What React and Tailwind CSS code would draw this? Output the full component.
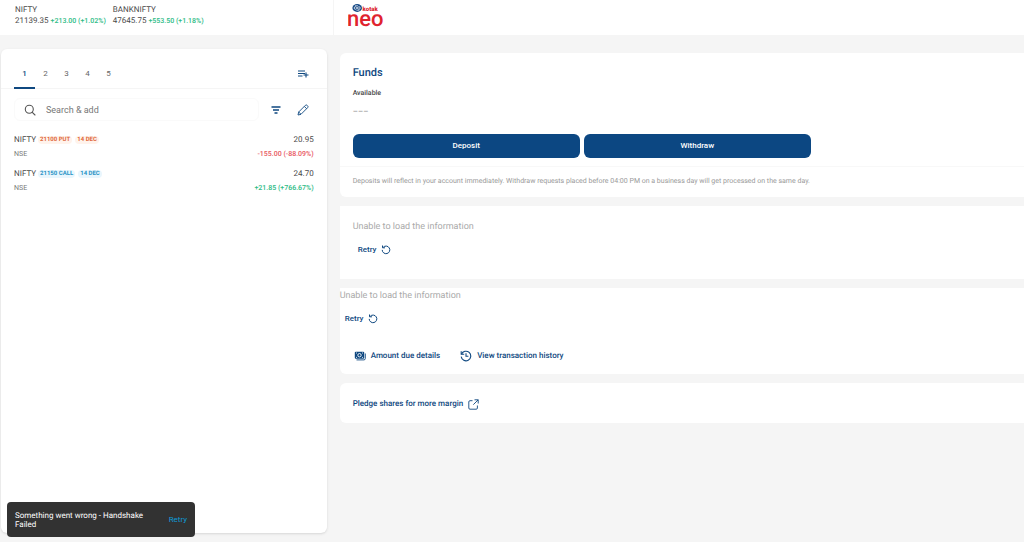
import { useState } from 'react'

const INDICES = [
  { name: 'NIFTY', price: '21139.35', change: '+213.00 (+1.02%)' },
  { name: 'BANKNIFTY', price: '47645.75', change: '+553.50 (+1.18%)' }
]

const WATCHLIST = [
  { symbol: 'NIFTY', strike: '21100 PUT', expiry: '14 DEC', type: 'put', exchange: 'NSE', price: '20.95', change: '-155.00 (-88.09%)', up: false },
  { symbol: 'NIFTY', strike: '21150 CALL', expiry: '14 DEC', type: 'call', exchange: 'NSE', price: '24.70', change: '+21.85 (+766.67%)', up: true }
]

export default function App() {
  return (
    <div className="min-h-screen flex flex-col bg-[#f5f5f5] font-['Roboto',sans-serif] text-[#4a4a4a] [text-rendering:geometricPrecision]">
      <Header />
      <div className="flex flex-1">
        <Watchlist />
        <main className="flex-1 min-w-0 pl-[13px] pt-[18px] flex flex-col gap-[9px]">
          <Funds />
          <section className="bg-white px-[13px] pt-[14px] h-[73px]">
            <LoadError />
          </section>
          <section className="bg-white rounded-bl-md pt-px h-[86px]">
            <LoadError />
            <div className="flex items-center gap-5 pl-[14px] mt-[25px]">
              <ActionLink icon={<MoneyIcon />}>Amount due details</ActionLink>
              <ActionLink icon={<HistoryIcon />}>View transaction history</ActionLink>
            </div>
          </section>
          <section className="bg-white rounded-l-md h-10 px-[13px] pt-[2px] flex items-center">
            <a href="#pledge" className="flex items-center gap-[5px] text-[8px] leading-3 font-medium text-[#0f4880]">
              Pledge shares for more margin
              <ExternalIcon />
            </a>
          </section>
        </main>
      </div>
      <Toast />
    </div>
  )
}

function Header() {
  return (
    <header className="h-[35px] flex bg-white">
      <div className="w-[32.6%] border-r border-[#f5f5f5] pl-[15px] pt-1 flex gap-[7px]">
        {INDICES.map(index => (
          <div key={index.name} className="text-[8px] leading-[11px]">
            <p>{index.name}</p>
            <p className="whitespace-nowrap">
              {index.price} <span className="text-[7px] font-medium text-[#2dbb85]">{index.change}</span>
            </p>
          </div>
        ))}
      </div>
      <Logo />
    </header>
  )
}

function Logo() {
  return (
    <a href="#home" aria-label="kotak neo" className="ml-[14px] mt-1">
      <svg width="38" height="30" viewBox="0 0 38 30" fontFamily="Roboto, sans-serif">
        <ellipse cx="9.2" cy="4" rx="4.8" ry="3.9" fill="#174a86" />
        <path d="M9.200 4C8.200 2.400 6.200 2.100 6.200 4s2 1.600 3 0 3-1.900 3 0-2 1.600-3 0M7 1.800h3M8.400 6.200h3" fill="none" stroke="#fff" strokeWidth="0.700" />
        <text x="14.500" y="6.500" fontSize="6" fontWeight="900" fill="#dc2430">kotak</text>
        <text x="-1" y="21.500" fontSize="22" fontWeight="500" fill="#e0232e">neo</text>
      </svg>
    </a>
  )
}

function Watchlist() {
  const [tab, setTab] = useState(1)

  return (
    <aside className="w-[31.9%] shrink-0 pl-px pt-[14px] pb-[9px] flex flex-col">
      <div className="flex-1 bg-white rounded-md shadow">
        <div className="h-10 pl-[13px] pr-[18px] flex items-center border-b border-[#f5f5f5]">
          <div className="flex-1 flex self-stretch -mb-px">
            {[1, 2, 3, 4, 5].map(n => (
              <button
                key={n}
                onClick={() => setTab(n)}
                className={`w-[21px] pt-3 border-b-2 text-[8px] ${n === tab ? 'border-[#0f4880] text-[#0f4880] font-medium' : 'border-transparent text-[#666666]'}`}
              >
                {n}
              </button>
            ))}
          </div>
          <button aria-label="Add watchlist" className="mt-[10px]"><ListPlusIcon /></button>
        </div>

        <div className="flex items-center mt-[9px] pl-[13px] pr-[18px]">
          <label className="flex-1 min-w-0 h-[23px] flex items-center gap-[10px] pl-[9px] border border-[#fafafa] rounded-md">
            <SearchIcon />
            <input type="text" aria-label="Search and add" placeholder="Search & add" className="flex-1 min-w-0 text-[9px] leading-3 outline-none placeholder:text-[#777777]" />
          </label>
          <button aria-label="Filter" className="ml-3"><FilterIcon /></button>
          <button aria-label="Edit watchlist" className="ml-4"><PencilIcon /></button>
        </div>

        <ul className="mt-3 px-[13px]">
          {WATCHLIST.map(item => <WatchRow key={item.strike} item={item} />)}
        </ul>
      </div>
    </aside>
  )
}

function WatchRow({ item }) {
  const tag = item.type === 'put' ? 'bg-[#fff3ec] text-[#e0693c]' : 'bg-[#e9f6fd] text-[#2a94c6]'

  return (
    <li className="h-[34px] flex justify-between">
      <div>
        <div className="h-[14px] flex items-center">
          <span className="text-[8px] leading-[14px] mr-[2px]">{item.symbol}</span>
          <span className={`text-[6px] leading-2 font-bold px-[2px] rounded-sm ${tag}`}>{item.strike}</span>
          <span className={`text-[6px] leading-2 font-bold px-[2px] rounded-sm ml-[3px] ${tag}`}>{item.expiry}</span>
        </div>
        <p className="text-[7px] leading-[14px] text-[#777777]">{item.exchange}</p>
      </div>
      <div className="text-right leading-[14px]">
        <p className="text-[8px]">{item.price}</p>
        <p className={`text-[7px] font-medium ${item.up ? 'text-[#2dbb85]' : 'text-[#e8575f]'}`}>{item.change}</p>
      </div>
    </li>
  )
}

function Funds() {
  return (
    <section className="bg-white rounded-l-md h-36 pt-[13px] flex flex-col">
      <div className="px-[13px]">
        <h1 className="text-[11px] leading-[14px] font-medium text-[#0f4880]">Funds</h1>
        <p className="mt-2 text-[7px] leading-[10px] font-medium">Available</p>
        <p className="mt-2 text-[8px] leading-3 text-[#777777]">–––</p>
        <div className="mt-4 w-[69.6%] flex gap-1">
          <button className="flex-1 h-6 rounded-md bg-[#0c4782] text-white text-[8px] font-medium">Deposit</button>
          <button className="flex-1 h-6 rounded-md bg-[#0c4782] text-white text-[8px] font-medium">Withdraw</button>
        </div>
      </div>
      <p className="mt-2 pt-2 px-[13px] border-t border-[#f8f8f8] text-[7px] leading-3 text-[#999999]">
        Deposits will reflect in your account immediately. Withdraw requests placed before 04:00 PM on a business day will get processed on the same day.
      </p>
    </section>
  )
}

function LoadError() {
  return (
    <div>
      <p className="text-[9px] leading-[14px] text-[#aaaaaa]">Unable to load the information</p>
      <button className="mt-[10px] ml-[5px] flex items-center gap-[5px] text-[8px] leading-3 font-medium text-[#0f4880]">
        Retry
        <RetryIcon />
      </button>
    </div>
  )
}

function ActionLink({ icon, children }) {
  return (
    <a href="#funds" className="flex items-center gap-[5px] text-[8px] leading-3 font-medium text-[#0f4880]">
      {icon}
      {children}
    </a>
  )
}

function Toast() {
  return (
    <div role="alert" className="fixed left-[7px] bottom-[5px] w-[188px] h-[35px] rounded-sm bg-[#323232] px-2 flex items-center justify-between">
      <p className="w-[136px] text-[8px] leading-[9px] text-white">Something went wrong - Handshake Failed</p>
      <button className="text-[8px] text-[#0f9bd7]">Retry</button>
    </div>
  )
}

/* Icons */

function ListPlusIcon() {
  return (
    <svg width="12" height="10" viewBox="0 0 12 10" fill="none" stroke="#0f4880" strokeWidth="1.100">
      <path d="M1 2h7M1 4.500h7M1 7h4.500M9 3.500v5M6.500 6h5" />
    </svg>
  )
}

function SearchIcon() {
  return (
    <svg width="12" height="12" viewBox="0 0 12 12" fill="none" stroke="#555555" strokeWidth="1.100" strokeLinecap="round">
      <circle cx="5.300" cy="5.300" r="4" />
      <path d="M8.300 8.300l2.700 2.700" />
    </svg>
  )
}

function FilterIcon() {
  return (
    <svg width="10" height="10" viewBox="0 0 10 10" fill="none" stroke="#0f4880" strokeWidth="1.300">
      <path d="M0.500 2h9M2 5h6M3.500 8h3" />
    </svg>
  )
}

function PencilIcon() {
  return (
    <svg width="12" height="12" viewBox="0 0 12 12" fill="none" stroke="#0f4880" strokeWidth="0.900" strokeLinejoin="round">
      <path d="M1 11l.7-3L8.300 1.400a1.300 1.300 0 0 1 1.900 0l.4.4a1.300 1.300 0 0 1 0 1.900L4 10.300zM7.300 2.400l2.300 2.300M1.700 8L4 10.300" />
    </svg>
  )
}

function RetryIcon() {
  return (
    <svg width="10" height="10" viewBox="0 0 10 10" fill="none" stroke="#0f4880" strokeWidth="1">
      <path d="M2.300 2.200a3.800 3.800 0 1 1-1.100 2.700" />
      <path d="M1.500 0.500v2.300h2.500" />
    </svg>
  )
}

function MoneyIcon() {
  return (
    <svg width="12" height="10" viewBox="0 0 12 10">
      <rect x="0.800" y="0.800" width="9.400" height="6.900" rx="1" fill="#0f4880" />
      <path d="M11.300 2.500v5a1.400 1.400 0 0 1-1.400 1.400H2.500" fill="none" stroke="#0f4880" strokeWidth="0.900" />
      <circle cx="5.500" cy="4.200" r="1.700" fill="#0f4880" stroke="#fff" strokeWidth="0.900" />
      <path d="M2 2h1M8 2h1M2 6.400h1M8 6.400h1" stroke="#fff" strokeWidth="0.800" />
    </svg>
  )
}

function HistoryIcon() {
  return (
    <svg width="12" height="12" viewBox="0 0 12 12" fill="none" stroke="#0f4880" strokeWidth="1.100">
      <path d="M1.500 4.200a4.800 4.800 0 1 1-.3 2.500" />
      <path d="M1.200 1.200v3h3M6 3.300v3h2.400" />
    </svg>
  )
}

function ExternalIcon() {
  return (
    <svg width="11" height="11" viewBox="0 0 11 11" fill="none" stroke="#0f4880" strokeWidth="0.900">
      <path d="M4.500 1.700H2A1.200 1.200 0 0 0 .8 2.900V9A1.200 1.200 0 0 0 2 10.200h6.200A1.200 1.200 0 0 0 9.400 9V6.500M6.500.8h3.700v3.700M10.200.8L5.300 5.700" />
    </svg>
  )
}
